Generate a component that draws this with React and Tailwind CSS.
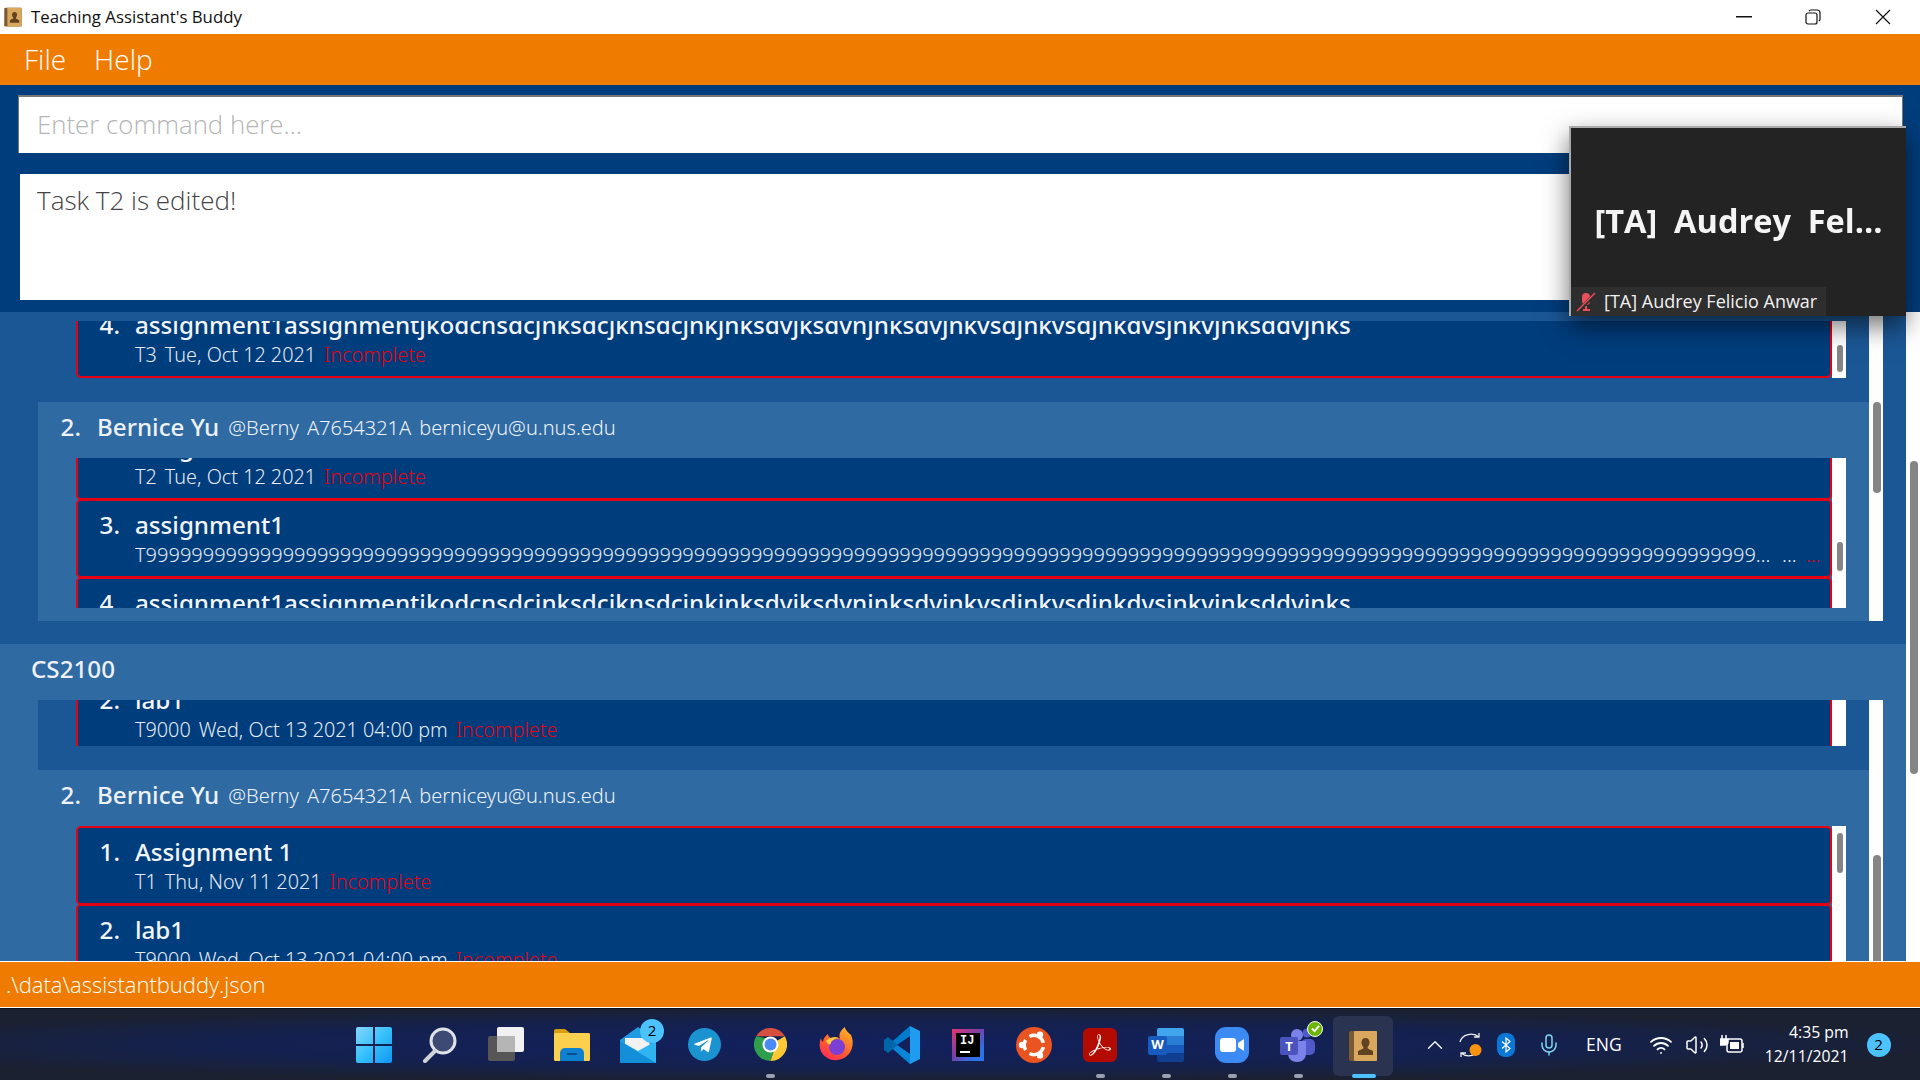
import { ChevronUp, Mic, Wifi, Volume2 } from 'lucide-react';
import { SiAdobeacrobatreader } from 'react-icons/si';
import { FaTelegramPlane } from 'react-icons/fa';

const nineRun = 'T' + '9'.repeat(200);

const TaskCard = ({ n, title, id, date, status = 'Incomplete', long }) => (
  <div className="box-border flex h-[79px] rounded-[5px] border-2 border-[#e60012] bg-[#003d7c] not-first:-mt-px">
    <div className="w-[57px] pt-[6px] pr-[15px] text-right text-[24.2px] leading-[36px] font-medium text-[#f2f5f9]">{n}.</div>
    <div className="min-w-0 flex-1 pt-[6px]">
      <div className="text-[24.2px] leading-[36px] font-medium whitespace-nowrap text-[#f2f5f9]">{title}</div>
      {long ? (
        <div className="-mt-[2px] flex text-[20px] leading-[28px] font-light text-[#e4ebf3]">
          <span className="w-[1636px] truncate">{nineRun}</span>
          <span className="ml-[11px]">...</span>
          <span className="ml-[9px] text-[#e60012]">...</span>
        </div>
      ) : (
        <div className="-mt-[2px] flex gap-[8px] text-[19.8px] leading-[28px] font-light text-[#e4ebf3]">
          <span>{id}</span>
          <span>{date}</span>
          <span className="text-[#e60012]">{status}</span>
        </div>
      )}
    </div>
  </div>
);

const LONG_TITLE = 'assignment1assignmentjkodcnsdcjnksdcjknsdcjnkjnksdvjksdvnjnksdvjnkvsdjnkvsdjnkdvsjnkvjnksddvjnks';

// white track with grey thumb, the thumb place comes in as classes
const Track = ({ thumb, wide }) => (
  <div className="w-[14px] shrink-0 overflow-hidden bg-white">
    <div className={`${wide ? 'mx-[4px] w-[8px]' : 'mx-[5px] w-[6px]'} rounded-full bg-[#858585] ${thumb}`} />
  </div>
);

const TaskPane = ({ height, offset, thumb, children }) => (
  <div className={`ml-[38px] flex w-[1770px] ${height}`}>
    <div className="w-[1756px] overflow-hidden">
      <div className={offset}>{children}</div>
    </div>
    <Track thumb={thumb} />
  </div>
);

const PersonHeader = () => (
  <div className="flex h-[56px] items-center pb-[5px] whitespace-nowrap text-[#eef2f7]">
    <span className="w-[59px] pr-[16px] text-right text-[24.2px] font-medium">2.</span>
    <span className="text-[24.2px] font-medium">Bernice Yu</span>
    <span className="ml-[9px] text-[20px] font-light">@Berny</span>
    <span className="ml-[8px] text-[20px] font-light">A7654321A</span>
    <span className="ml-[8px] text-[20px] font-light">berniceyu@u.nus.edu</span>
  </div>
);

const CloseIcon = () => (
  <svg width="16" height="16" viewBox="0 0 16 16" stroke="#111" strokeWidth="1.2"><path d="M1 1 15 15M15 1 1 15" /></svg>
);

const RestoreIcon = () => (
  <svg width="16" height="16" viewBox="0 0 16 16" fill="none" stroke="#111" strokeWidth="1.2">
    <rect x="1" y="4" width="11" height="11" rx="2" />
    <path d="M4 2.2c.3-.8 1-1.2 1.8-1.2H12c1.7 0 3 1.3 3 3v6.2c0 .8-.5 1.5-1.2 1.8" />
  </svg>
);

const BookIcon = ({ size = 20 }) => (
  <svg width={size} height={size} viewBox="0 0 32 32">
    <rect x="2" y="1" width="28" height="30" rx="2" fill="#7a5a32" />
    <rect x="7" y="1" width="23" height="30" rx="1" fill="#d9a75e" />
    <path d="M18.5 8c2.6 0 4 2 4 4.500 0 1.800-.8 3.300-1.800 4.200v1.800l5.300 2.500V25H11v-4l5.300-2.500v-1.800c-1-.9-1.800-2.400-1.800-4.200 0-2.500 1.400-4.500 4-4.500Z" fill="#60431f" />
  </svg>
);

const WindowsIcon = () => (
  <svg width="36" height="36" viewBox="0 0 36 36">
    <defs>
      <linearGradient id="win" x1="0" y1="0" x2="1" y2="1">
        <stop offset="0" stopColor="#86d6fb" />
        <stop offset="0.5" stopColor="#36c0fb" />
        <stop offset="1" stopColor="#0f96f2" />
      </linearGradient>
    </defs>
    <path d="M2 0h15v17H0V2a2 2 0 0 1 2-2Zm17 0h15a2 2 0 0 1 2 2v15H19ZM0 19h17v17H2a2 2 0 0 1-2-2Zm19 0h17v15a2 2 0 0 1-2 2H19Z" fill="url(#win)" />
  </svg>
);

const SearchIcon = () => (
  <svg width="36" height="36" viewBox="0 0 36 36">
    <circle cx="21" cy="14" r="12" fill="#3d4a73" stroke="#dfe3e8" strokeWidth="3" />
    <path d="M13 24 3 34" stroke="#cfd3d8" strokeWidth="4" strokeLinecap="round" />
  </svg>
);

const TaskViewIcon = () => (
  <svg width="36" height="36" viewBox="0 0 36 36">
    <rect x="0" y="9" width="27" height="25" rx="2" fill="#565656" />
    <rect x="9" y="0" width="27" height="25" rx="2" fill="#f1f1f1" />
    <rect x="9" y="9" width="18" height="16" fill="#b5b5b5" />
  </svg>
);

const FolderIcon = () => (
  <svg width="36" height="32" viewBox="0 0 36 32">
    <path d="M0 2a2 2 0 0 1 2-2h9l5 4h18a2 2 0 0 1 2 2v4H0Z" fill="#d69e10" />
    <rect x="0" y="4" width="36" height="28" rx="1.500" fill="#fcd04f" />
    <path d="M6 32v-8a5 5 0 0 1 5-5h14a5 5 0 0 1 5 5v8Z" fill="#0f7fd0" />
    <rect x="13" y="24" width="10" height="2" fill="#0a4f8d" />
  </svg>
);

const MailIcon = () => (
  <div className="relative h-[36px] w-[36px]">
    <svg width="36" height="36" viewBox="0 0 36 36">
      <path d="M0 13 18 0l18 13v23H0Z" fill="#1f9be4" />
      <path d="M5 11h22l4 9-13 7-13-7Z" fill="#f2f2f2" />
      <path d="M0 14 18 24l18-10v22H0Z" fill="#2fb4f2" />
      <path d="M0 36V14l36 22Z" fill="#138ed8" />
    </svg>
    <div className="absolute top-[-8px] right-[-8px] flex h-[24px] w-[24px] items-center justify-center rounded-full bg-[#4cc2ff] font-['Open_Sans'] text-[15px] text-black">2</div>
  </div>
);

const ChromeIcon = () => (
  <svg width="33" height="33" viewBox="-16.500 -16.500 33 33">
    <path d="M-14.300-8.250A16.500 16.500 0 0 1 14.300-8.250L0-8.250Z" fill="#d94f3d" />
    <path d="M-14.300-8.250A16.500 16.500 0 0 0 0 16.500L7-4Z" fill="#2e9f4d" />
    <path d="M14.300-8.250A16.500 16.500 0 0 1 0 16.500L7-4Z" fill="#fcc934" />
    <circle r="8" fill="#fff" />
    <circle r="6" fill="#4a8af4" />
  </svg>
);

const FirefoxIcon = () => (
  <svg width="34" height="36" viewBox="0 0 34 36">
    <defs>
      <linearGradient id="fx" x1="0.8" y1="0" x2="0.2" y2="1">
        <stop offset="0" stopColor="#ffb326" />
        <stop offset="0.6" stopColor="#ff5a2c" />
        <stop offset="1" stopColor="#ff2a5c" />
      </linearGradient>
    </defs>
    <path d="M32 8c3 6 2 15-3 20-6 6-16 7-22 2C1 26-1 18 2 11c0 2 1 3 2 4 0-3 2-6 5-8 0 2 1 3 3 4 3-1 7-1 9 1-2-5 1-9 5-12 0 3 3 5 6 8Z" fill="url(#fx)" />
    <circle cx="18" cy="20" r="8" fill="#7b3fd6" />
    <path d="M7 14c3-3 8-5 13-3-4 0-6 2-8 4 0 3-2 4-5-1Z" fill="#ffcf3f" />
  </svg>
);

const VsCodeIcon = () => (
  <svg width="36" height="38" viewBox="0 0 36 38">
    <path d="M26 0 36 5v28l-10 5Z" fill="#1f9cf0" />
    <path d="M26 0v10L12 19l14 9v10L9 23l-5 4-4-3v-10l4-3 5 4Z" fill="#0065a9" />
    <path d="M26 0 9 15l4 4 13-9Z" fill="#007acc" />
    <path d="M26 38 9 23l4-4 13 9Z" fill="#0a84d6" />
  </svg>
);

const IntellijIcon = () => (
  <div className="flex h-[32px] w-[32px] bg-[linear-gradient(135deg,#e8346f_0%,#7a3ea8_45%,#2b73e8_80%)] p-[4px]">
    <div className="flex h-full w-full flex-col justify-between bg-black px-[4px] py-[2px] font-['Liberation_Mono'] text-[12px] leading-[13px] font-bold text-white">
      <span>IJ</span>
      <span className="mb-[2px] h-[2px] w-[10px] bg-white" />
    </div>
  </div>
);

const UbuntuIcon = () => (
  <svg width="36" height="38" viewBox="-18 -19 36 38">
    <circle r="18" fill="#e95420" />
    <path d="M-4.500-8.500A9.600 9.600 0 0 1 9.300-2.200M9.300 2.200A9.600 9.600 0 0 1-4.500 8.500M-8.300 5A9.600 9.600 0 0 1-8.300-5" fill="none" stroke="#fff" strokeWidth="3.500" />
    <circle cx="-12" cy="0" r="3.200" fill="#fff" />
    <circle cx="6" cy="-10.400" r="3.200" fill="#fff" />
    <circle cx="6" cy="10.400" r="3.200" fill="#fff" />
  </svg>
);

const WordIcon = () => (
  <div className="relative h-[34px] w-[36px]">
    <div className="ml-[9px] flex h-[34px] w-[27px] flex-col overflow-hidden rounded-[2px]">
      <div className="flex-1 bg-[#41a5ee]" />
      <div className="flex-1 bg-[#2b7cd3]" />
      <div className="flex-1 bg-[#185abd]" />
      <div className="flex-1 bg-[#103f91]" />
    </div>
    <div className="absolute top-[8px] left-0 flex h-[19px] w-[19px] items-center justify-center rounded-[2px] bg-[#185abd] font-['Open_Sans'] text-[13px] font-bold text-white">W</div>
  </div>
);

const ZoomIcon = () => (
  <div className="flex h-[36px] w-[34px] items-center justify-center rounded-[11px] bg-[#3c8bf5]">
    <svg width="24" height="14" viewBox="0 0 24 14" fill="#fff">
      <rect x="0" y="0" width="16" height="14" rx="3" />
      <path d="m18 5 6-4v12l-6-4Z" />
    </svg>
  </div>
);

const TeamsIcon = () => (
  <div className="relative h-[36px] w-[36px]">
    <svg width="36" height="36" viewBox="0 0 36 36">
      <circle cx="27" cy="6" r="4.500" fill="#5059c9" />
      <rect x="21" y="12" width="14" height="16" rx="5" fill="#5059c9" />
      <circle cx="17" cy="8" r="6" fill="#7b83eb" />
      <path d="M8 14h18v12c0 6-4 9-9 9s-9-3-9-9Z" fill="#7b83eb" />
      <rect x="0" y="10" width="18" height="18" rx="2" fill="#4b53bc" />
    </svg>
    <span className="absolute top-[12px] left-0 w-[18px] text-center font-['Open_Sans'] text-[13px] leading-[14px] font-bold text-white">T</span>
    <div className="absolute top-[-6px] right-[-7px] flex h-[16px] w-[16px] items-center justify-center rounded-full border border-white bg-[#6bb700]">
      <svg width="9" height="9" viewBox="0 0 10 10" fill="none" stroke="#fff" strokeWidth="2"><path d="m1 5 3 3 5-6" /></svg>
    </div>
  </div>
);

const SLOTS = [
  { key: 'start', icon: <WindowsIcon /> },
  { key: 'search', icon: <SearchIcon /> },
  { key: 'tasks', icon: <TaskViewIcon /> },
  { key: 'files', icon: <FolderIcon /> },
  { key: 'mail', icon: <MailIcon /> },
  { key: 'telegram', icon: <div className="flex h-[33px] w-[33px] items-center justify-center rounded-full bg-[#1c93d1]"><FaTelegramPlane className="mr-[2px] text-[20px] text-white" /></div> },
  { key: 'chrome', icon: <ChromeIcon />, open: true },
  { key: 'firefox', icon: <FirefoxIcon /> },
  { key: 'vscode', icon: <VsCodeIcon /> },
  { key: 'idea', icon: <IntellijIcon /> },
  { key: 'ubuntu', icon: <UbuntuIcon /> },
  { key: 'acrobat', icon: <div className="flex h-[34px] w-[34px] items-center justify-center rounded-[6px] bg-[#b30b00]"><SiAdobeacrobatreader className="text-[22px] text-white" /></div>, open: true },
  { key: 'word', icon: <WordIcon />, open: true },
  { key: 'zoom', icon: <ZoomIcon />, open: true },
  { key: 'teams', icon: <TeamsIcon />, open: true },
];

const Taskbar = () => (
  <div className="relative flex h-[72px] border-t border-[#0b1020] bg-[radial-gradient(ellipse_at_46%_50%,#12205e_0%,#14214f_45%,#1b2130_75%)]">
    <div className="ml-[341px] flex">
      {SLOTS.map((slot) => (
        <div key={slot.key} className="relative flex w-[66px] items-center justify-center">
          {slot.icon}
          {slot.open && <div className="absolute bottom-[2px] h-[4px] w-[9px] rounded-full bg-[#9aa0ad]" />}
        </div>
      ))}
      <div className="mt-[7px] ml-[2px] flex h-[60px] w-[60px] items-center justify-center rounded-[6px] bg-[#2a3350] pb-[1px]">
        <BookIcon size={32} />
      </div>
    </div>
    <div className="absolute bottom-[2px] left-[1352px] h-[4px] w-[24px] rounded-full bg-[#4cc2ff]" />
    <div className="ml-[29px] flex items-center text-white">
      <ChevronUp size={26} strokeWidth={1.200} />
      <svg className="ml-[9px]" width="26" height="26" viewBox="0 0 26 26" fill="none" stroke="#eee" strokeWidth="1.300">
        <path d="M3 10C5 2 16 0 22 5M22 1v4h-5M23 16c-2 8-13 10-19 5M4 25v-4h5" />
        <circle cx="18.500" cy="18" r="6" fill="#f7930e" stroke="none" />
      </svg>
      <div className="ml-[14px] flex h-[24px] w-[18px] items-center justify-center rounded-[8px] bg-[#0a78d7]">
        <svg width="10" height="16" viewBox="0 0 10 16" fill="none" stroke="#fff" strokeWidth="1.200"><path d="M1 4.500 9 11.500 5 15V1l4 3.500L1 11.500" /></svg>
      </div>
      <Mic className="ml-[22px] text-[#7fd3ee]" size={24} strokeWidth={1.500} />
      <span className="ml-[25px] font-['Open_Sans'] text-[17.500px]">ENG</span>
      <Wifi className="ml-[27px]" size={24} strokeWidth={1.800} />
      <Volume2 className="ml-[12px]" size={24} strokeWidth={1.500} />
      <svg className="ml-[10px]" width="26" height="20" viewBox="0 0 26 20" fill="none" stroke="#fff" strokeWidth="1.500">
        <path d="M3 0v4M7 0v4M1 4h8v3c0 2-2 3-4 3H1" fill="#fff" />
        <rect x="8" y="4" width="15" height="13" rx="2" />
        <rect x="11" y="7" width="9" height="7" fill="#fff" stroke="none" />
        <path d="M24 8v5" />
      </svg>
      <div className="ml-[18px] w-[86px] pb-[2px] text-right font-['Open_Sans'] text-[15.8px] leading-[24px] whitespace-nowrap">
        <div>4:35 pm</div>
        <div>12/11/2021</div>
      </div>
      <div className="ml-[18px] flex h-[24px] w-[24px] items-center justify-center rounded-full bg-[#4cc2ff] font-['Open_Sans'] text-[15px] text-black">2</div>
    </div>
  </div>
);

const ZoomTile = () => (
  <div className="absolute top-[126px] left-[1569px] h-[190px] w-[337px] border-t-2 border-l-2 border-[#a9a9a9] bg-[#232323] shadow-[0_10px_24px_rgba(0,0,0,0.55)]">
    <div className="flex h-[188px] items-center justify-center pb-[1px] font-['Open_Sans'] text-[32.500px] font-bold whitespace-pre text-[#f4f4f4] blur-[0.5px]">
      {'[TA]  Audrey  Fel...'}
    </div>
    <div className="absolute bottom-0 left-0 flex h-[29px] w-[255px] items-center bg-[#2e2e2e] font-['Open_Sans'] text-[18px] whitespace-nowrap text-[#f1f1f1]">
      <svg className="ml-[5px]" width="20" height="20" viewBox="0 0 20 20" fill="#e8505b">
        <rect x="6" y="1" width="8" height="12" rx="4" />
        <path d="M7 18h7M10 14v4" strokeWidth="2" stroke="#e8505b" />
        <path d="M1 20 19 2" stroke="#2e2e2e" strokeWidth="3.500" />
        <path d="M1 19 19 1" stroke="#e8505b" strokeWidth="1.500" />
      </svg>
      <span className="ml-[8px]">[TA] Audrey Felicio Anwar</span>
    </div>
  </div>
);

export default function App() {
  return (
    <div className="relative flex h-screen w-[1920px] flex-col overflow-hidden bg-[#003d7c] font-['Noto_Sans',sans-serif]">
      <div className="flex h-[34px] items-center bg-white">
        <div className="ml-[3px]"><BookIcon /></div>
        <span className="ml-[8px] font-['Open_Sans'] text-[16.800px] text-[#111]">Teaching Assistant's Buddy</span>
        <svg className="ml-auto" width="16" height="2"><rect width="16" height="1.500" fill="#111" /></svg>
        <div className="ml-[53px]"><RestoreIcon /></div>
        <div className="mr-[29px] ml-[54px]"><CloseIcon /></div>
      </div>

      <div className="flex h-[51px] items-center gap-[28px] bg-[#ef7c00] pb-[2px] pl-[24px] font-['Open_Sans'] text-[28px] font-light text-white">
        <span>File</span>
        <span>Help</span>
      </div>

      <div className="h-[227px] shrink-0 pt-[10px]">
        <div className="ml-[18px] box-border h-[58px] w-[1885px] border-t-2 border-r border-l border-[#777] bg-white pl-[18px] font-['Open_Sans'] text-[25.800px] leading-[54px] font-light text-[#b5b5b5]">
          Enter command here...
        </div>
        <div className="mt-[21px] ml-[20px] h-[126px] w-[1881px] bg-white pt-[7px] pl-[17px] font-['Open_Sans'] text-[26px] leading-[38px] font-light text-[#444]">
          Task T2 is edited!
        </div>
      </div>

      <div className="flex min-h-0 flex-1">
        <div className="w-[1906px] shrink-0 overflow-hidden bg-[#1b5795]">
          {/* first module, scrolled so only its last person shows */}
          <div className="flex">
            <div className="w-[38px] shrink-0" />
            <div className="w-[1831px]">
              <div className="h-[90px] pt-[9px]">
                <TaskPane height="h-[57px]" offset="-mt-[22px]" thumb="mt-[24px] h-[27px]">
                  <TaskCard n={4} title={LONG_TITLE} id="T3" date="Tue, Oct 12 2021" />
                </TaskPane>
              </div>
              <div className="h-[219px] bg-[#2f6aa3]">
                <PersonHeader />
                <TaskPane height="h-[150px]" offset="-mt-[37px]" thumb="mt-[84px] h-[29px]">
                  <TaskCard n={2} title="assignment1" id="T2" date="Tue, Oct 12 2021" />
                  <TaskCard n={3} title="assignment1" long />
                  <TaskCard n={4} title={LONG_TITLE} id="T3" date="Tue, Oct 12 2021" />
                </TaskPane>
              </div>
            </div>
            <Track wide thumb="mt-[90px] h-[91px]" />
            <div className="flex-1" />
          </div>
          <div className="h-[23px]" />

          <div className="flex h-[56px] items-center bg-[#2f6aa3] pb-[5px] pl-[31px] text-[24.2px] font-medium text-[#eef2f7]">CS2100</div>

          <div className="flex bg-[#2f6aa3]">
            <div className="w-[38px] shrink-0" />
            <div className="w-[1831px]">
              <div className="h-[70px] bg-[#1b5795]">
                <TaskPane height="h-[46px]" offset="-mt-[26px]" thumb="hidden">
                  <TaskCard n={2} title="lab1" id="T9000" date="Wed, Oct 13 2021 04:00 pm" />
                </TaskPane>
              </div>
              <div className="h-[191px]">
                <PersonHeader />
                <TaskPane height="h-[135px]" offset="" thumb="mt-[7px] h-[40px]">
                  <TaskCard n={1} title="Assignment 1" id="T1" date="Thu, Nov 11 2021" />
                  <TaskCard n={2} title="lab1" id="T9000" date="Wed, Oct 13 2021 04:00 pm" />
                </TaskPane>
              </div>
            </div>
            <Track wide thumb="mt-[155px] h-[110px]" />
            <div className="flex-1" />
          </div>
        </div>
        <Track wide thumb="mt-[149px] h-[313px]" />
      </div>

      <div className="box-border flex h-[47px] shrink-0 items-center border-y border-white bg-[#ef7c00] pl-[6px] font-['Open_Sans'] text-[22px] font-light text-white">
        .\data\assistantbuddy.json
      </div>

      <Taskbar />
      <ZoomTile />
    </div>
  );
}
